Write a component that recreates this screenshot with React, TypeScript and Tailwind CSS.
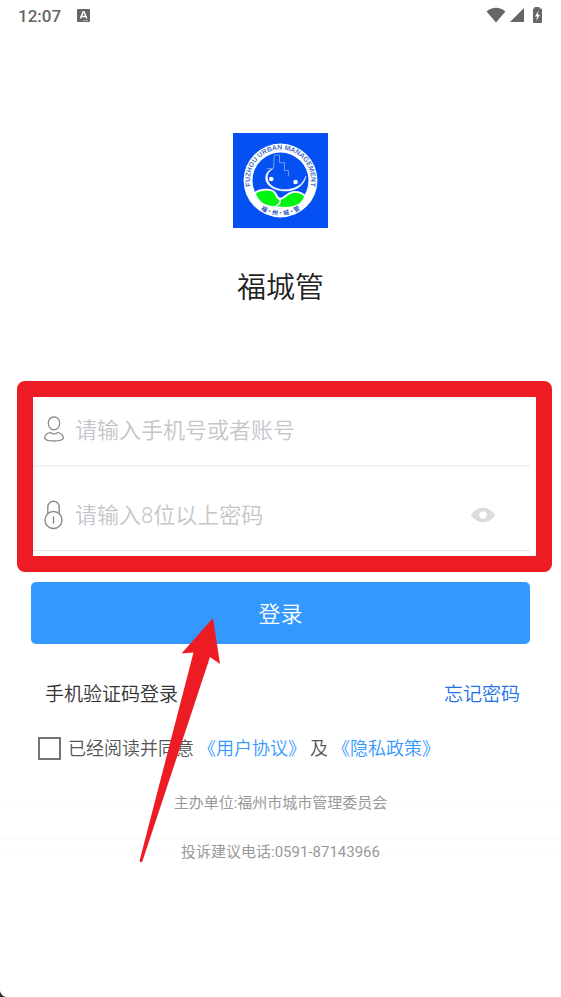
import { useState } from 'react'

const footerLines = ['主办单位:福州市城市管理委员会', '投诉建议电话:0591-87143966']

function StatusBar() {
  return (
    <header className="flex h-8 items-center justify-between pr-4 pl-[18px] text-[#666]">
      <div className="flex items-center gap-4">
        <span className="text-[17px] leading-5 font-medium">12:07</span>
        <svg className="mb-0.5 h-[13px] w-[13px]" viewBox="0 0 12 12">
          <rect width="12" height="12" rx="1" fill="currentColor" />
          <path d="M3.2 8.8L5.6 2.8h1L9 8.8M4.2 6.9H8" fill="none" stroke="#fff" strokeWidth="1.4" />
          <path d="M6 10.7h4" stroke="#fff" strokeWidth="0.7" strokeDasharray="1 0.6" />
        </svg>
      </div>
      <div className="flex items-center gap-1 pb-0.5">
        <svg className="h-4 w-5" viewBox="0 0 20 16">
          <path d="M0.6 4.6C6 -0.4 14 -0.4 19.4 4.6L10 15.6Z" fill="currentColor" />
        </svg>
        <svg className="h-4 w-[14px]" viewBox="0 0 14 16">
          <path d="M14 1v14H0Z" fill="currentColor" />
        </svg>
        <svg className="ml-px h-[18px] w-4" viewBox="0 0 16 18">
          <path
            d="M5.5 1h5v1.5H12a1 1 0 011 1V16a1 1 0 01-1 1H5a1 1 0 01-1-1V3.500a1 1 0 01.5-1h1Z"
            fill="currentColor"
          />
          <path d="M9.500 4.500L6 10.500h2.200L7.300 15L11 8.800H8.800Z" fill="#fff" />
        </svg>
      </div>
    </header>
  )
}

function Logo() {
  return (
    <svg className="h-[95px] w-[95px]" viewBox="0 0 96 96" role="img" aria-label="福州城管">
      <defs>
        <path id="ring-top" d="M18.300 55.700A30.800 30.800 0 1 1 77.700 55.700" />
        <path id="ring-bottom" d="M20 69.500A35.500 35.500 0 0 0 76 69.500" />
      </defs>
      <rect width="96" height="96" fill="#0450f3" />
      <circle cx="48" cy="48" r="37.300" fill="#fff" />
      <circle cx="48" cy="48" r="28.300" fill="#0450f3" />
      <path
        d="M34 36.200L41 35.600L41.700 22.300H47V30H52V38H56V43.700"
        fill="none"
        stroke="#7d9fe6"
        strokeWidth="1"
      />
      <path
        d="M40 36.500C31.500 38.500 31 49 37 53.600C43 58.600 52 59.500 59 58C67.500 56 72.500 50.500 73.600 43.600C71 50.500 66 55 58.500 56.500C51 58 43.500 57 38.500 52.700C33 48 33.500 40 40 36.500Z"
        fill="#fff"
        stroke="#fff"
        strokeWidth="0.5"
      />
      <circle cx="38.700" cy="46.500" r="2.300" fill="#fff" />
      <circle cx="63.200" cy="49.500" r="2.300" fill="#fff" />
      <path
        d="M22 61C25.500 57 38 55.500 42 60C45 64 44.500 67 48 66.500C53 66 55 59.500 62.500 59.500C67.500 59.500 70.500 61 73 64C71 70 66 74 60 75C54 76.500 48 75.500 43 75C33 75 25 70 22 61Z"
        fill="#01f510"
        stroke="#fff"
        strokeWidth="2"
        strokeLinejoin="round"
      />
      <path
        d="M47 66.500C49.500 70.500 46 72.500 41 75.500"
        fill="none"
        stroke="#fff"
        strokeWidth="1.500"
      />
      <text
        className="font-['Liberation_Sans',sans-serif] text-[7px] font-bold"
        fill="#4a70c8"
        textAnchor="middle"
      >
        <textPath href="#ring-top" startOffset="50%">
          FUZHOU URBAN MANAGEMENT
        </textPath>
      </text>
      <text
        className="font-['Noto_Sans_CJK_SC',sans-serif] text-[6px] font-bold"
        fill="#2855b8"
        textAnchor="middle"
      >
        <textPath href="#ring-bottom" startOffset="50%">
          福·州·城·管
        </textPath>
      </text>
    </svg>
  )
}

function UserIcon() {
  return (
    <svg
      className="h-[26px] w-5"
      viewBox="0 0 20 26"
      fill="none"
      stroke="#8a8a8a"
      strokeWidth="1.3"
      strokeLinejoin="round"
    >
      <path d="M10 1C6.500 1 4.300 3.600 4.300 7.200C4.300 10.800 6.800 13.800 10 13.800S15.700 10.800 15.700 7.200C15.700 3.600 13.500 1 10 1Z" />
      <path d="M6 16.500C3 17.400.7 19.800.7 21.800C.7 24 4 25 10 25s9.300-1 9.300-3.200c0-2-2.300-4.400-5.300-5.300C12 18.200 8 18.200 6 16.500Z" />
    </svg>
  )
}

function LockIcon() {
  return (
    <svg className="h-[30px] w-5" viewBox="0 0 20 30" fill="none" stroke="#8a8a8a" strokeWidth="1.400">
      <circle cx="9.500" cy="20" r="8.500" />
      <path d="M3.800 13.700V7a5.700 5.700 0 0111.400 0v6.700M9.500 16.500v7" />
    </svg>
  )
}

// Hand-drawn style arrow pointing at the login button
function Arrow() {
  return (
    <svg
      className="pointer-events-none absolute top-9 left-[108px] h-[245px] w-[82px]"
      viewBox="0 0 82 245"
      aria-hidden="true"
    >
      <path
        d="M74 0L81 46L71 39L3.500 243Q2 245.500.500 243L54.500 34.500L42.500 35.500Z"
        fill="#ed1c24"
      />
    </svg>
  )
}

export default function App() {
  const [phone, setPhone] = useState('')
  const [password, setPassword] = useState('')
  const [visible, setVisible] = useState(false)
  const [agreed, setAgreed] = useState(false)

  return (
    <div className="relative min-h-screen bg-white font-[Roboto,'Noto_Sans_CJK_SC',sans-serif]">
      <StatusBar />

      <main>
        <div className="flex flex-col items-center pt-[101px]">
          <Logo />
          <h1 className="mt-[38px] text-[29px] leading-11 font-[350] text-[#222]">福城管</h1>
        </div>

        <form className="mt-[83px] px-[31px]" onSubmit={(e) => e.preventDefault()}>
          <div className="relative">
            <div className="flex h-[74px] items-center gap-[11px] border-b-2 border-[#f2f2f2] pl-[13px]">
              <label htmlFor="phone" aria-label="账号">
                <UserIcon />
              </label>
              <input
                id="phone"
                type="text"
                value={phone}
                onChange={(e) => setPhone(e.target.value)}
                placeholder="请输入手机号或者账号"
                className="h-10 min-w-0 flex-1 pt-0.5 text-[22px] font-[350] text-[#333] outline-none placeholder:text-[#c5c5ca]"
              />
            </div>
            <div className="flex h-[84px] items-center gap-[11px] border-b border-[#e3e3e3] pt-3 pr-[34px] pl-[13px]">
              <label htmlFor="password" aria-label="密码">
                <LockIcon />
              </label>
              <input
                id="password"
                type={visible ? 'text' : 'password'}
                value={password}
                onChange={(e) => setPassword(e.target.value)}
                placeholder="请输入8位以上密码"
                className="h-10 min-w-0 flex-1 pt-0.5 text-[22px] font-[350] text-[#333] outline-none placeholder:text-[#c5c5ca]"
              />
              <button type="button" aria-label="显示密码" onClick={() => setVisible(!visible)}>
                <svg className="h-4 w-[26px]" viewBox="0 0 26 16">
                  <path
                    fillRule="evenodd"
                    d="M.8 8C7 -1.600 19 -1.600 25.200 8C19 17.600 7 17.600.8 8ZM13 4.300a3.700 3.700 0 100 7.400a3.700 3.700 0 000-7.400Z"
                    fill="#dcdcdc"
                  />
                </svg>
              </button>
            </div>
            <div className="pointer-events-none absolute -top-3 -right-[22px] -bottom-[21px] -left-[14px] rounded-lg border-16 border-[#ed1c24]" />
          </div>

          <div className="relative mt-[31px]">
            <button
              type="submit"
              className="h-[62px] w-full rounded-[5px] bg-[#3399ff] pt-0.5 text-[22px] font-[350] text-white"
            >
              登录
            </button>

            <div className="mt-9 flex justify-between pr-[10px] pl-[14px] text-[19px] leading-[30px] font-[350]">
              <a href="#sms" className="text-[#333]">
                手机验证码登录
              </a>
              <a href="#forgot" className="text-[#2472ea]">
                忘记密码
              </a>
            </div>

            <div className="mt-6 flex items-center pl-[7px] text-[18px] leading-[30px] font-[350] text-[#555]">
              <input
                id="agree"
                type="checkbox"
                checked={agreed}
                onChange={(e) => setAgreed(e.target.checked)}
                className="mr-[7px] mb-0.5 h-[23px] w-[23px] appearance-none border-2 border-[#757575] checked:bg-[#3399ff]"
              />
              <p>
                <label htmlFor="agree">已经阅读并同意</label>
                <a href="#terms" className="mx-1 text-[#3399ff]">
                  《用户协议》
                </a>
                <span>及</span>
                <a href="#privacy" className="mx-1 text-[#3399ff]">
                  《隐私政策》
                </a>
              </p>
            </div>
            <Arrow />
          </div>
        </form>
      </main>

      <footer className="mt-[27px] text-[15px] leading-6 text-[#999]">
        <div className="flex items-center border-b border-[#fafafa] pb-6">
          <span className="h-px flex-1 bg-[#fafafa]" />
          <p>{footerLines[0]}</p>
          <span className="h-px flex-1 bg-[#fafafa]" />
        </div>
        <div className="flex items-center">
          <span className="h-px flex-1 bg-[#fafafa]" />
          <p>{footerLines[1]}</p>
          <span className="h-px flex-1 bg-[#fafafa]" />
        </div>
      </footer>

      <svg className="absolute bottom-0 left-0 h-[6px] w-[6px]" viewBox="0 0 6 6" aria-hidden="true">
        <path d="M0 0Q1 5 6 6H0Z" fill="#2b2b38" />
      </svg>
    </div>
  )
}
